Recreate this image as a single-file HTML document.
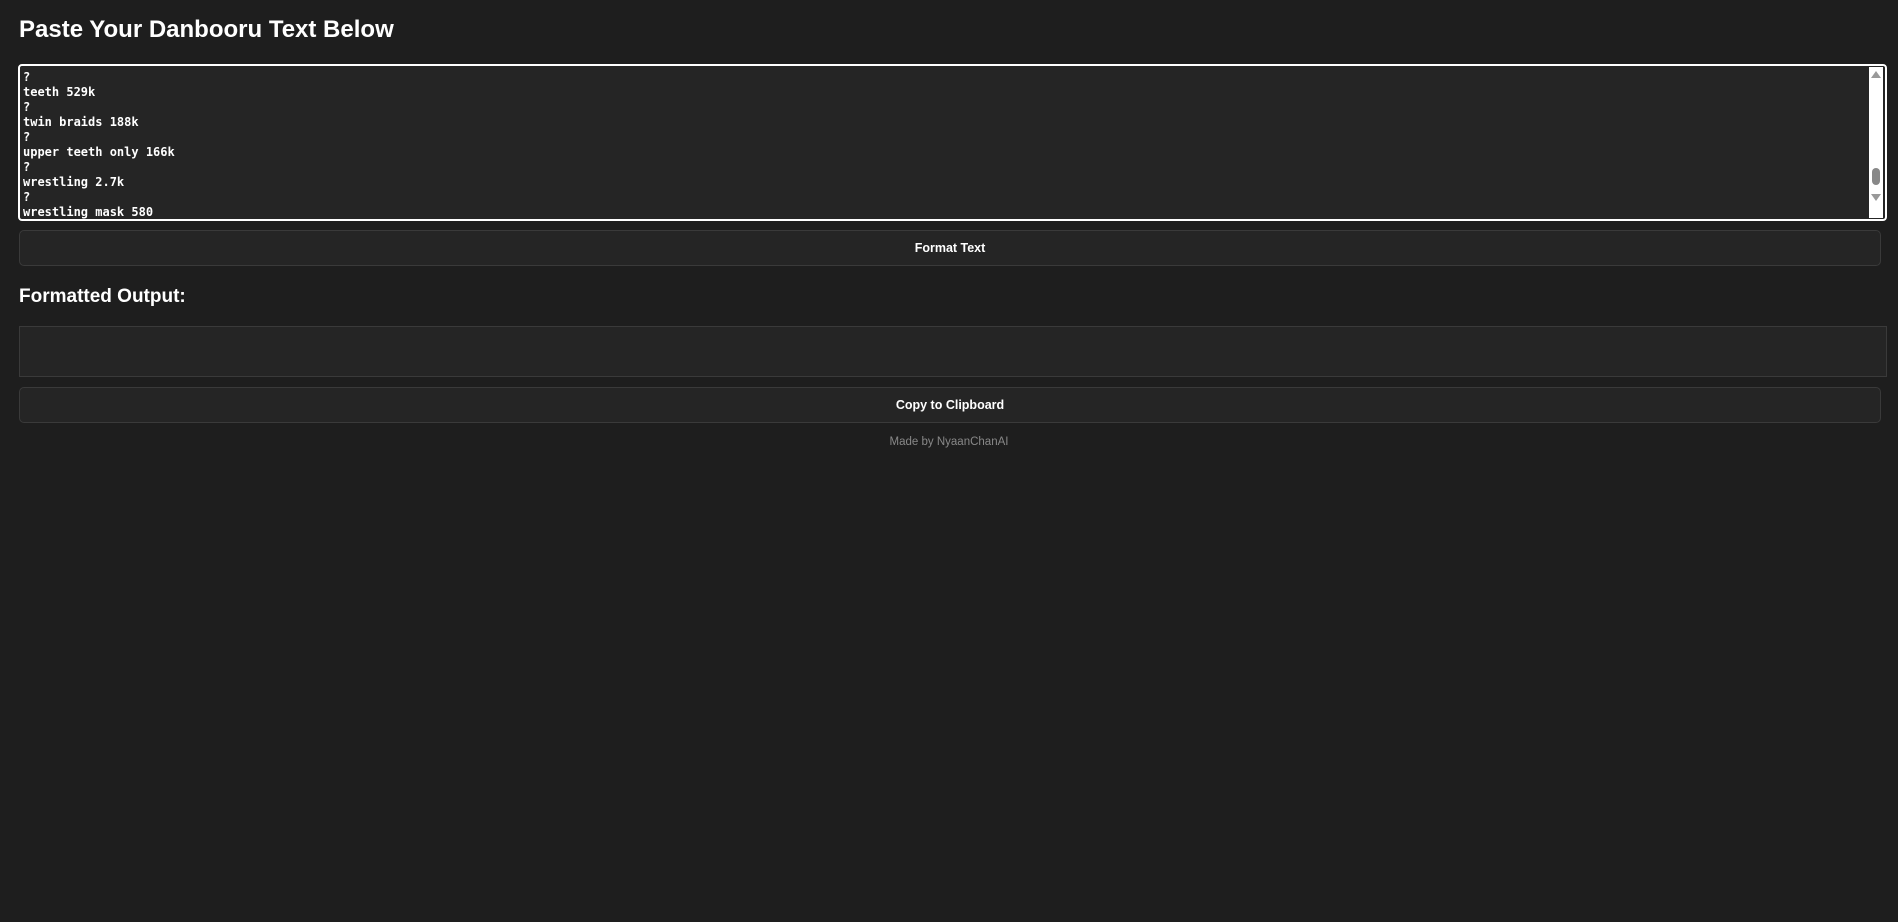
<!DOCTYPE html>
<html><head><meta charset="utf-8"><style>
html,body{margin:0;padding:0;background:#1e1e1e;width:1898px;height:922px;overflow:hidden;font-family:"Liberation Sans",Arial,sans-serif;color:#fff}
h1{position:absolute;left:19px;top:16px;margin:0;font-size:24px;font-weight:bold}
.ta{position:absolute;left:18px;top:64px;width:1869px;height:157px;border:2px solid #fff;border-radius:4px;background:#252525;box-sizing:border-box;overflow:hidden}
.ta pre{margin:0;padding:4px 0 0 3px;font-family:"DejaVu Sans Mono","Liberation Mono",monospace;font-weight:bold;font-size:12px;line-height:15px;color:#fff}
.sb{position:absolute;right:2px;top:1px;width:14px;bottom:1px;background:#fff}
.sb .up{position:absolute;left:2px;top:4px;width:0;height:0;border-left:5px solid transparent;border-right:5px solid transparent;border-bottom:7px solid #999}
.sb .dn{position:absolute;left:2px;top:127px;width:0;height:0;border-left:5px solid transparent;border-right:5px solid transparent;border-top:7px solid #999}
.sb .th{position:absolute;left:3px;top:101px;width:8px;height:17px;border-radius:4px;background:#888}
.btn{position:absolute;left:19px;width:1862px;height:36px;box-sizing:border-box;border:1px solid #3a3a3a;border-radius:5px;background:#252525;font-size:12.5px;font-weight:bold;text-align:center;line-height:34px}
h2{position:absolute;left:19px;top:286px;margin:0;font-size:19px;font-weight:bold}
.out{position:absolute;left:19px;top:326px;width:1868px;height:51px;box-sizing:border-box;border:1px solid #3a3a3a;background:#252525}
.foot{position:absolute;left:0;width:1898px;top:436px;text-align:center;font-size:11.5px;color:#888}
</style></head><body>
<h1>Paste Your Danbooru Text Below</h1>
<div class="ta"><pre>?
teeth 529k
?
twin braids 188k
?
upper teeth only 166k
?
wrestling 2.7k
?
wrestling mask 580</pre>
<div class="sb"><div class="up"></div><div class="th"></div><div class="dn"></div></div></div>
<div class="btn" style="top:230px">Format Text</div>
<h2>Formatted Output:</h2>
<div class="out"></div>
<div class="btn" style="top:387px">Copy to Clipboard</div>
<div class="foot">Made by NyaanChanAI</div>
</body></html>
